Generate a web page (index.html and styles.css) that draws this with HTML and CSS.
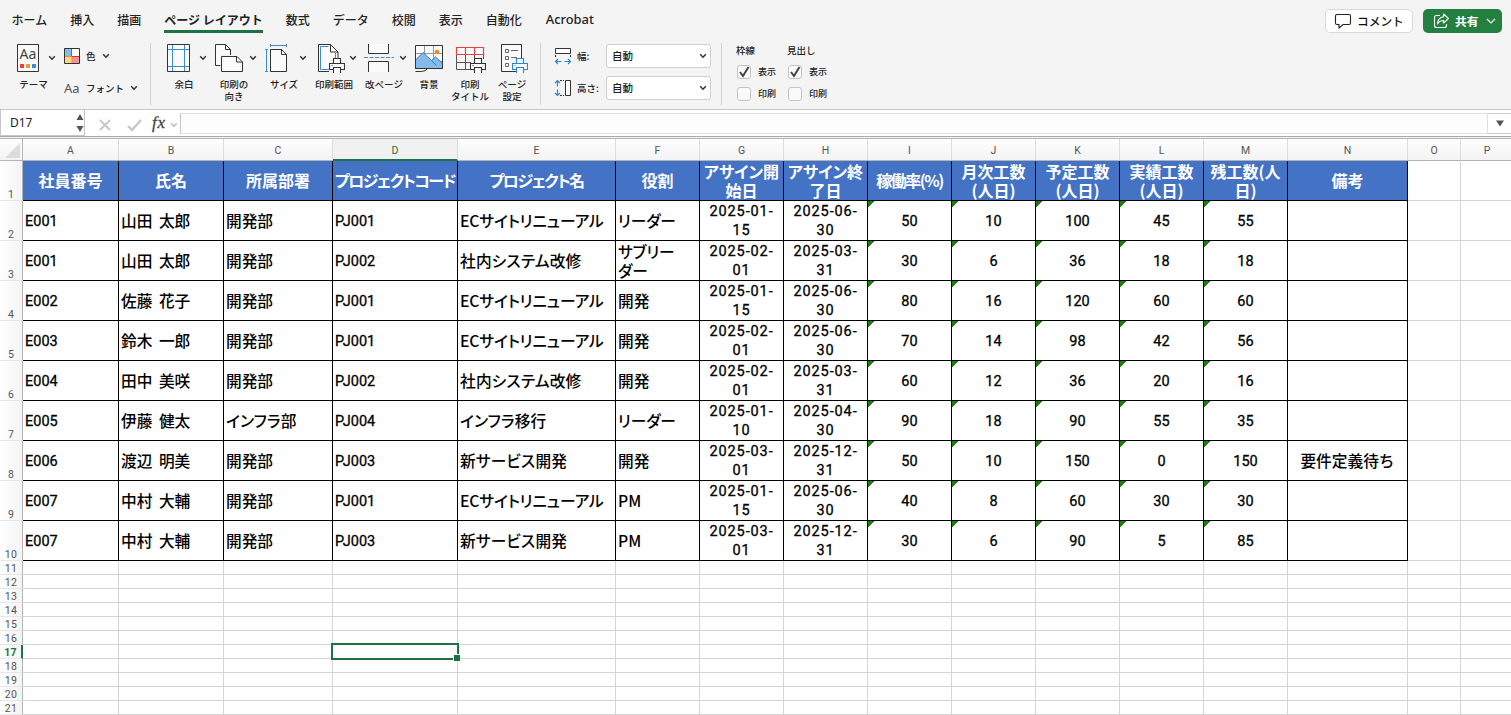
FILE: index.html
```html
<!DOCTYPE html>
<html lang="ja">
<head>
    <meta charset="UTF-8">
    <title>アサイン管理表</title>
    <link rel="stylesheet" href="styles.css">
</head>
<body>
    <!-- shared icon shapes -->
    <svg class="defs">
        <symbol id="chevron" viewBox="0 0 8 8"><path d="M1.200 2.300 4 5.200 6.800 2.300" fill="none" stroke="currentColor" stroke-width="1.500"/></symbol>
        <symbol id="printer" viewBox="0 0 16 16">
            <path d="M4.500 5.500v-5h7v5M4.500 11.500h-4v-6h15v6h-4" fill="#fafafa" stroke="currentColor" stroke-width="1.100"/>
            <path d="M4.500 9.500h7v6h-7z" fill="#fafafa" stroke="currentColor" stroke-width="1.100"/>
            <path d="M2.500 7.500h1" stroke="currentColor"/>
        </symbol>
    </svg>

    <header class="ribbon">
        <nav class="tabs">
            <a>ホーム</a>
            <a>挿入</a>
            <a>描画</a>
            <a class="active">ページ レイアウト</a>
            <a>数式</a>
            <a>データ</a>
            <a>校閲</a>
            <a>表示</a>
            <a>自動化</a>
            <a class="latin">Acrobat</a>
            <div class="actions">
                <button class="btn-comment">
                    <svg width="18" height="16" viewBox="0 0 18 16"><path d="M3 1.500h12q1.500 0 1.500 1.500v7q0 1.500-1.500 1.500H9L5 15v-3.500H3q-1.500 0-1.500-1.500V3q0-1.500 1.500-1.500z" fill="none" stroke="#222" stroke-width="1.100"/></svg>
                    <span>コメント</span>
                </button>
                <button class="btn-share">
                    <svg width="17" height="16" viewBox="0 0 17 16"><path d="M7 2.500H3.500q-2 0-2 2v8q0 2 2 2h8q2 0 2-2V11M10.500 1l5 4.500-5 4.500V7.500Q6.500 7.500 4.500 11q.5-6.500 6-7.200z" fill="none" stroke="#fff" stroke-width="1.100" stroke-linejoin="round"/></svg>
                    <span>共有</span>
                    <svg width="10" height="8" viewBox="0 0 10 8"><path d="M1 2l4 4 4-4" fill="none" stroke="#fff" stroke-width="1.100"/></svg>
                </button>
            </div>
        </nav>

        <div class="tools">
            <div class="tool theme">
                <div class="icon-row">
                    <svg width="32" height="30" viewBox="0 0 32 30">
                        <path d="M7.500 1.500h21v27h-21z" fill="#fafafa" stroke="#333"/>
                        <text x="9.500" y="15.500" class="aa">Aa</text>
                        <path d="M10 21h4v4h-4z" fill="#e8403a"/><path d="M16 21h4v4h-4z" fill="#f39a2d"/><path d="M22 21h4v4h-4z" fill="#3d8bd0"/>
                    </svg>
                    <svg class="chev"><use href="#chevron"/></svg>
                </div>
                <span>テーマ</span>
            </div>
            <div class="stack">
                <div class="small-tool">
                    <svg width="16" height="16" viewBox="0 0 16 16">
                        <path d="M0 0h8v8H0z" fill="#83bdec"/><path d="M8 0h8v8H8z" fill="#fff"/><path d="M0 8h8v8H0z" fill="#fbd68b"/><path d="M8 8h8v8H8z" fill="#f4919a"/>
                        <path d="M7.500 0v8" stroke="#2b7cc9"/><path d="M0 8.500h8v7" fill="none" stroke="#f0921e"/><path d="M8 8.500h8" stroke="#e52b22"/>
                        <path d="M.5.5h15v15H.5z" fill="none" stroke="#333"/>
                    </svg>
                    <span>色</span>
                    <svg class="chev"><use href="#chevron"/></svg>
                </div>
                <div class="small-tool">
                    <span class="font-icon">Aa</span>
                    <span>フォント</span>
                    <svg class="chev"><use href="#chevron"/></svg>
                </div>
            </div>

            <div class="divider"></div>

            <div class="tool">
                <div class="icon-row">
                    <svg width="38" height="30" viewBox="0 0 38 30">
                        <path d="M8.500 1.500h22v27h-22z" fill="#fafafa" stroke="#333"/>
                        <path d="M13.500 2v26M25.500 2v26M9 6.500h21M9 23.500h21" stroke="#3d8bd0"/>
                    </svg>
                    <svg class="chev"><use href="#chevron"/></svg>
                </div>
                <span>余白</span>
            </div>
            <div class="tool">
                <div class="icon-row">
                    <svg width="38" height="30" viewBox="0 0 38 30">
                        <path d="M6.500 1.500h10l5 5v16h-15z" fill="#fafafa" stroke="#333"/><path d="M16.500 1.500v5h5" fill="none" stroke="#333"/>
                        <path d="M11.500 12h16v0h6v18h-22z" fill="#f4f4f4"/>
                        <path d="M12.500 13.500h15.500l5.500 5.500v9.500h-21z" fill="#fafafa" stroke="#333"/><path d="M27.500 13.500v5.500h6" fill="none" stroke="#333"/>
                    </svg>
                    <svg class="chev"><use href="#chevron"/></svg>
                </div>
                <span>印刷の<br>向き</span>
            </div>
            <div class="tool">
                <div class="icon-row">
                    <svg width="38" height="30" viewBox="0 0 38 30">
                        <path d="M11.500 6.500h11l5 5v17h-16z" fill="#fafafa" stroke="#333"/><path d="M22.500 6.500v5h5" fill="none" stroke="#333"/>
                        <path d="M11.500 2.500h16M11.500 1v3M27.500 1v3M7.500 6.500v22M6 6.500h3M6 28.500h3" stroke="#3d8bd0"/>
                    </svg>
                    <svg class="chev"><use href="#chevron"/></svg>
                </div>
                <span>サイズ</span>
            </div>
            <div class="tool">
                <div class="icon-row">
                    <svg width="38" height="30" viewBox="0 0 38 30">
                        <path d="M9.500 1.500h12l7 7v19h-19z" fill="#fafafa"/>
                        <path d="M20 28.500H9.500v-27h12l7.500 7.500v6M21.500 1.500v7.500h7.500" fill="none" stroke="#333"/>
                        <path d="M20 26.500h-8.500v-23h8M26.500 10v5" fill="none" stroke="#3d8bd0"/>
                        <svg x="20" y="15" width="16" height="16" color="#333"><use href="#printer"/></svg>
                    </svg>
                    <svg class="chev"><use href="#chevron"/></svg>
                </div>
                <span>印刷範囲</span>
            </div>
            <div class="tool">
                <div class="icon-row">
                    <svg width="38" height="30" viewBox="0 0 38 30">
                        <path d="M9.500 1v9.500h20V1M9.500 29v-10.500h20V29" fill="#fafafa" stroke="#333"/>
                        <path d="M5 14.500h30" stroke="#3d8bd0" stroke-dasharray="4 1.500"/>
                    </svg>
                    <svg class="chev"><use href="#chevron"/></svg>
                </div>
                <span>改ページ</span>
            </div>
            <div class="tool w40">
                <div class="icon-row">
                    <svg width="38" height="30" viewBox="0 0 38 30">
                        <path d="M6.500 2.500h27v23h-9l-4 3h-7v-3h-7z" fill="#fafafa"/>
                        <path d="M15.500 2v23M24.500 2v23M6 10.500h27M6 18.500h27" stroke="#999"/>
                        <circle cx="28" cy="9" r="2.300" fill="#f28a22"/>
                        <path d="M6.500 17l7.500-7.500 8.500 8 4-3.500 7 6.500v5h-27z" fill="#86bbe9" stroke="#2b7cc9"/>
                        <path d="M22.500 17.500l5 5" stroke="#2b7cc9"/>
                        <path d="M6.500 25.500v-23h27v23zM6.500 28.500h6q4 0 6-3" fill="none" stroke="#333"/>
                    </svg>
                </div>
                <span>背景</span>
            </div>
            <div class="tool w42">
                <div class="icon-row">
                    <svg width="38" height="30" viewBox="0 0 38 30">
                        <path d="M7.500 12v14.500h14M7 19.500h15M16.500 12v14M25.500 12v6M34.500 12v4" fill="none" stroke="#555"/>
                        <path d="M7.500 4.500h27v7h-27zM16.500 4.500v7M25.500 4.500v7" fill="#fafafa" stroke="#e8403a" stroke-width="1.200"/>
                        <svg x="21" y="15" width="16" height="16" color="#333"><use href="#printer"/></svg>
                    </svg>
                </div>
                <span>印刷<br>タイトル</span>
            </div>
            <div class="tool w42">
                <div class="icon-row">
                    <svg width="38" height="30" viewBox="0 0 38 30">
                        <path d="M10.500 1.500h20v27h-20z" fill="#fafafa" stroke="#333"/>
                        <path d="M14.500 6.500h3v3h-3zM14.500 13.500h3v3h-3zM14.500 20.500h3v3h-3zM20 7.500h7M20 14.500h6" fill="none" stroke="#666"/>
                        <svg x="21" y="15" width="16" height="16" color="#2b86d0"><use href="#printer"/></svg>
                    </svg>
                </div>
                <span>ページ<br>設定</span>
            </div>

            <div class="divider after-page"></div>

            <div class="scale">
                <div class="scale-row">
                    <svg width="18" height="18" viewBox="0 0 18 18">
                        <path d="M1.500 1.500h15v5h-15z" fill="#fff" stroke="#333"/><path d="M1.500 8v3M16.500 8v3" stroke="#333" stroke-dasharray="2 1"/>
                        <path d="M1.500 14.500h6M10.500 14.500h6M4 12l-2.500 2.500L4 17M14 12l2.500 2.500L14 17" fill="none" stroke="#2b86d0" stroke-width="1.200"/>
                    </svg>
                    <label>幅:</label>
                    <div class="select">自動<svg class="chev"><use href="#chevron"/></svg></div>
                </div>
                <div class="scale-row">
                    <svg width="18" height="18" viewBox="0 0 18 18">
                        <path d="M11.500 1.500h5v15h-5z" fill="#fff" stroke="#333"/><path d="M6 1.500h4M6 16.500h4" stroke="#333" stroke-dasharray="2 1"/>
                        <path d="M3.500 1.500v6M3.500 10.500v6M1 4l2.500-2.500L6 4M1 14l2.500 2.500L6 14" fill="none" stroke="#2b86d0" stroke-width="1.200"/>
                    </svg>
                    <label>高さ:</label>
                    <div class="select">自動<svg class="chev"><use href="#chevron"/></svg></div>
                </div>
            </div>

            <div class="divider after-scale"></div>

            <div class="checks">
                <div class="title">枠線</div>
                <label><i class="box"><svg width="14" height="14" viewBox="0 0 14 14"><path d="M3 7l3 4 5.500-9" fill="none" stroke="#444" stroke-width="2"/></svg></i>表示</label>
                <label><i class="box"></i>印刷</label>
            </div>
            <div class="checks">
                <div class="title">見出し</div>
                <label><i class="box"><svg width="14" height="14" viewBox="0 0 14 14"><path d="M3 7l3 4 5.500-9" fill="none" stroke="#444" stroke-width="2"/></svg></i>表示</label>
                <label><i class="box"></i>印刷</label>
            </div>
        </div>
    </header>

    <div class="formula-bar">
        <div class="name-box">
            <span>D17</span>
            <svg width="8" height="20" viewBox="0 0 8 20"><path d="M4 1l3.500 6h-7zM4 19l3.500-6h-7z" fill="#555"/></svg>
        </div>
        <div class="fx-buttons">
            <svg width="14" height="14" viewBox="0 0 14 14"><path d="M2 2l10 10M12 2L2 12" stroke="#c8c8c8" stroke-width="2"/></svg>
            <svg width="15" height="14" viewBox="0 0 15 14"><path d="M1 8l4 4 9-10" fill="none" stroke="#c8c8c8" stroke-width="2.400"/></svg>
            <em>fx</em>
            <svg class="chev"><use href="#chevron"/></svg>
        </div>
        <div class="formula-input"></div>
        <div class="expand"><svg width="8" height="7" viewBox="0 0 8 7"><path d="M0 .5h8l-4 6z" fill="#555"/></svg></div>
    </div>

    <table class="sheet">
        <colgroup>
            <col class="c-head"><col class="c-a"><col class="c-b"><col class="c-c"><col class="c-d"><col class="c-e">
            <col class="c-n"><col class="c-n"><col class="c-n"><col class="c-n"><col class="c-n"><col class="c-n"><col class="c-n"><col class="c-n">
            <col class="c-note"><col class="c-o"><col class="c-p">
        </colgroup>
        <thead>
            <tr>
                <th class="corner"><svg width="15" height="15" viewBox="0 0 15 15"><path d="M15 0v15H0z" fill="#dcdcdc"/></svg></th>
                <th>A</th><th>B</th><th>C</th><th class="selected">D</th><th>E</th><th>F</th><th>G</th><th>H</th><th>I</th><th>J</th><th>K</th><th>L</th><th>M</th><th>N</th><th>O</th><th>P</th>
            </tr>
        </thead>
        <tbody>
            <tr class="title-row">
                <th>1</th>
                <td>社員番号</td><td>氏名</td><td>所属部署</td><td><span class="kana">プロジェクトコード</span></td><td><span class="kana">プロジェクト名</span></td><td>役割</td>
                <td><span class="kana2">アサイン開</span><br>始日</td><td><span class="kana2">アサイン終</span><br>了日</td><td><span class="pct">稼働率(%)</span></td>
                <td>月次工数<br>(人日)</td><td>予定工数<br>(人日)</td><td>実績工数<br>(人日)</td><td>残工数(人<br>日)</td><td>備考</td><td></td><td></td>
            </tr>
            <tr class="data">
                <th>2</th>
                <td>E001</td><td>山田 太郎</td><td>開発部</td><td>PJ001</td><td class="k">ECサイトリニューアル</td><td class="k">リーダー</td>
                <td>2025-01-<br>15</td><td>2025-06-<br>30</td><td>50</td><td>10</td><td>100</td><td>45</td><td>55</td><td></td><td></td><td></td>
            </tr>
            <tr class="data">
                <th>3</th>
                <td>E001</td><td>山田 太郎</td><td>開発部</td><td>PJ002</td><td class="k2">社内システム改修</td><td class="k">サブリー<br>ダー</td>
                <td>2025-02-<br>01</td><td>2025-03-<br>31</td><td>30</td><td>6</td><td>36</td><td>18</td><td>18</td><td></td><td></td><td></td>
            </tr>
            <tr class="data">
                <th>4</th>
                <td>E002</td><td>佐藤 花子</td><td>開発部</td><td>PJ001</td><td class="k">ECサイトリニューアル</td><td>開発</td>
                <td>2025-01-<br>15</td><td>2025-06-<br>30</td><td>80</td><td>16</td><td>120</td><td>60</td><td>60</td><td></td><td></td><td></td>
            </tr>
            <tr class="data">
                <th>5</th>
                <td>E003</td><td>鈴木 一郎</td><td>開発部</td><td>PJ001</td><td class="k">ECサイトリニューアル</td><td>開発</td>
                <td>2025-02-<br>01</td><td>2025-06-<br>30</td><td>70</td><td>14</td><td>98</td><td>42</td><td>56</td><td></td><td></td><td></td>
            </tr>
            <tr class="data">
                <th>6</th>
                <td>E004</td><td>田中 美咲</td><td>開発部</td><td>PJ002</td><td class="k2">社内システム改修</td><td>開発</td>
                <td>2025-02-<br>01</td><td>2025-03-<br>31</td><td>60</td><td>12</td><td>36</td><td>20</td><td>16</td><td></td><td></td><td></td>
            </tr>
            <tr class="data">
                <th>7</th>
                <td>E005</td><td>伊藤 健太</td><td class="k2">インフラ部</td><td>PJ004</td><td class="k2">インフラ移行</td><td class="k">リーダー</td>
                <td>2025-01-<br>10</td><td>2025-04-<br>30</td><td>90</td><td>18</td><td>90</td><td>55</td><td>35</td><td></td><td></td><td></td>
            </tr>
            <tr class="data">
                <th>8</th>
                <td>E006</td><td>渡辺 明美</td><td>開発部</td><td>PJ003</td><td class="k2">新サービス開発</td><td>開発</td>
                <td>2025-03-<br>01</td><td>2025-12-<br>31</td><td>50</td><td>10</td><td>150</td><td>0</td><td>150</td><td>要件定義待ち</td><td></td><td></td>
            </tr>
            <tr class="data">
                <th>9</th>
                <td>E007</td><td>中村 大輔</td><td>開発部</td><td>PJ001</td><td class="k">ECサイトリニューアル</td><td>PM</td>
                <td>2025-01-<br>15</td><td>2025-06-<br>30</td><td>40</td><td>8</td><td>60</td><td>30</td><td>30</td><td></td><td></td><td></td>
            </tr>
            <tr class="data">
                <th>10</th>
                <td>E007</td><td>中村 大輔</td><td>開発部</td><td>PJ003</td><td class="k2">新サービス開発</td><td>PM</td>
                <td>2025-03-<br>01</td><td>2025-12-<br>31</td><td>30</td><td>6</td><td>90</td><td>5</td><td>85</td><td></td><td></td><td></td>
            </tr>
            <tr><th>11</th><td></td><td></td><td></td><td></td><td></td><td></td><td></td><td></td><td></td><td></td><td></td><td></td><td></td><td></td><td></td><td></td></tr>
            <tr><th>12</th><td></td><td></td><td></td><td></td><td></td><td></td><td></td><td></td><td></td><td></td><td></td><td></td><td></td><td></td><td></td><td></td></tr>
            <tr><th>13</th><td></td><td></td><td></td><td></td><td></td><td></td><td></td><td></td><td></td><td></td><td></td><td></td><td></td><td></td><td></td><td></td></tr>
            <tr><th>14</th><td></td><td></td><td></td><td></td><td></td><td></td><td></td><td></td><td></td><td></td><td></td><td></td><td></td><td></td><td></td><td></td></tr>
            <tr><th>15</th><td></td><td></td><td></td><td></td><td></td><td></td><td></td><td></td><td></td><td></td><td></td><td></td><td></td><td></td><td></td><td></td></tr>
            <tr><th>16</th><td></td><td></td><td></td><td></td><td></td><td></td><td></td><td></td><td></td><td></td><td></td><td></td><td></td><td></td><td></td><td></td></tr>
            <tr><th class="selected">17</th><td></td><td></td><td></td><td class="active-cell"><div class="cursor"></div></td><td></td><td></td><td></td><td></td><td></td><td></td><td></td><td></td><td></td><td></td><td></td><td></td></tr>
            <tr><th>18</th><td></td><td></td><td></td><td></td><td></td><td></td><td></td><td></td><td></td><td></td><td></td><td></td><td></td><td></td><td></td><td></td></tr>
            <tr><th>19</th><td></td><td></td><td></td><td></td><td></td><td></td><td></td><td></td><td></td><td></td><td></td><td></td><td></td><td></td><td></td><td></td></tr>
            <tr><th>20</th><td></td><td></td><td></td><td></td><td></td><td></td><td></td><td></td><td></td><td></td><td></td><td></td><td></td><td></td><td></td><td></td></tr>
            <tr><th>21</th><td></td><td></td><td></td><td></td><td></td><td></td><td></td><td></td><td></td><td></td><td></td><td></td><td></td><td></td><td></td><td></td></tr>
        </tbody>
    </table>
</body>
</html>
```
FILE: styles.css
```css
* {
    box-sizing: border-box;
}

body {
    margin: 0;
    width: 1511px;
    height: 715px;
    overflow: hidden;
    background: #fff;
    color: #222;
    font-family: "Noto Sans CJK JP", sans-serif;
}

.defs {
    display: none;
}

.chev {
    width: 8px;
    height: 8px;
    color: #333;
    flex: none;
}

/* ribbon */
.ribbon {
    height: 110px;
    background: #f4f4f4;
    border-bottom: 1px solid #c6c6c6;
}

.tabs {
    display: flex;
    gap: 23px;
    height: 43px;
    padding-left: 11.500px;
    font-size: 12px;
    font-weight: 500;
}

.tabs a {
    height: 33px;
    line-height: 39px;
    white-space: nowrap;
}

.tabs .active {
    font-weight: 700;
    border-bottom: 3px solid #1e7145;
}

.tabs .latin {
    margin-left: 1px;
    font-family: "Noto Sans", sans-serif;
    font-size: 12.900px;
}

.actions {
    display: flex;
    gap: 10px;
    margin-left: auto;
    padding: 9px 9px 0 0;
}

.actions button {
    display: flex;
    align-items: center;
    height: 24px;
    padding: 0 8px;
    border-radius: 5px;
    font-family: inherit;
    font-size: 11.700px;
    font-weight: 500;
    line-height: 20px;
    white-space: nowrap;
}

.btn-comment {
    width: 88px;
    gap: 5px;
    background: #fff;
    border: 1px solid #d8d8d8;
    color: #111;
}

.btn-share {
    width: 79px;
    background: #238040;
    border: 0;
    color: #fff;
    gap: 5px;
}

.btn-share span {
    margin-right: 3px;
}

.btn-share svg {
    flex: none;
}

.actions .btn-share {
    padding-left: 10px;
    padding-right: 0;
    font-weight: 700;
}

.tools {
    display: flex;
    font-size: 9.500px;
    font-weight: 500;
    line-height: 12px;
}

.tool {
    width: 50px;
    text-align: center;
    white-space: nowrap;
}

.tool > span {
    display: block;
    margin: 5px -5px 0;
}

.tool.w40 {
    width: 40px;
}

.tool.w42 {
    width: 42px;
}

.icon-row {
    display: flex;
    align-items: center;
    height: 30px;
}

.icon-row > svg:first-child {
    flex: none;
}

.icon-row .chev {
    margin-left: 2px;
}

.tool.theme {
    width: 47px;
    margin-left: 10px;
    margin-right: 7px;
}

.theme .icon-row .chev {
    margin-left: 6px;
}

.aa {
    font-family: "Noto Sans", sans-serif;
    font-size: 14px;
    font-weight: 400;
    fill: #444;
}

.stack {
    display: flex;
    flex-direction: column;
    gap: 16px;
    width: 86px;
    padding-top: 5px;
}

.small-tool {
    display: flex;
    align-items: center;
    gap: 6px;
    height: 16px;
}

.font-icon {
    width: 16px;
    font-family: "Noto Sans", sans-serif;
    font-size: 13px;
    font-weight: 400;
    color: #555;
}

.divider {
    width: 1px;
    height: 62px;
    margin-right: 8px;
    background: #d2d2d2;
}

.after-page {
    margin-left: 7px;
}

.after-scale {
    margin-right: 7px;
}

.scale {
    display: flex;
    flex-direction: column;
    gap: 8px;
    width: 172px;
    padding: 1px 0 0 5px;
}

.scale-row {
    display: flex;
    align-items: center;
    height: 24px;
}

.scale-row label {
    width: 34px;
    padding-left: 5px;
    white-space: nowrap;
}

.select {
    display: flex;
    align-items: center;
    justify-content: space-between;
    width: 105px;
    height: 24px;
    padding: 0 3px 0 5px;
    background: #fff;
    border: 1px solid #cfcfcf;
    border-radius: 3px;
    font-size: 10.500px;
}

.checks {
    width: 51px;
    padding-left: 7px;
    font-size: 9px;
}

.checks .title {
    height: 21px;
    padding-top: 1px;
    font-size: 9.500px;
}

.checks label {
    display: flex;
    align-items: center;
    gap: 7px;
    height: 22px;
    margin-top: -3px;
    margin-bottom: 3px;
    padding-left: 1px;
    white-space: nowrap;
}

.checks label + label {
    margin-top: -3px;
}

.box {
    display: flex;
    width: 14px;
    height: 14px;
    background: #fafafa;
    border: 1px solid #c4c4c4;
    border-radius: 3px;
}

.box svg {
    margin: -1px;
}

/* formula bar */
.formula-bar {
    display: flex;
    height: 29px;
    background: linear-gradient(#fff 26px, #a9a9a9 26px, #a9a9a9 27px, #f4f4f4 27px, #f4f4f4 28px, #b4b4b4 28px);
}

.name-box {
    display: flex;
    align-items: center;
    justify-content: space-between;
    width: 85px;
    height: 26px;
    padding: 0 0 0 9px;
    border: 1px solid #c6c6c6;
    border-top: 0;
    font-family: "Noto Sans", sans-serif;
    font-size: 12px;
}

.fx-buttons {
    display: flex;
    align-items: center;
    width: 95px;
    height: 26px;
    padding: 3px 0 0 13px;
    gap: 15px;
}

.fx-buttons em {
    font: italic 400 17px "Liberation Serif", serif;
    -webkit-text-stroke: 0.300px #444;
    letter-spacing: 0.700px;
    color: #444;
    margin: -3px -11px 0 -5px;
}

.fx-buttons .chev {
    color: #bbb;
}

.formula-input {
    flex: 1;
    height: 21px;
    margin-top: 3px;
    border: 1px solid #e0e0e0;
    border-left-color: #c6c6c6;
    background: #fdfdfd;
}

.expand {
    display: flex;
    align-items: center;
    justify-content: center;
    width: 23px;
    height: 21px;
    margin-top: 3px;
    border: 1px solid #ccc;
    border-width: 1px 0 1px 0;
}

/* sheet */
.sheet {
    width: 1511px;
    table-layout: fixed;
    border-collapse: separate;
    border-spacing: 0;
}

.c-head { width: 23px; }
.c-a { width: 96px; }
.c-b { width: 105px; }
.c-c { width: 109px; }
.c-d { width: 125px; }
.c-e { width: 158px; }
.c-n { width: 84px; }
.c-note { width: 120px; }
.c-o { width: 53px; }
.c-p { width: 50px; }

.sheet th {
    padding: 0;
    font-family: Roboto, "Noto Sans CJK JP", sans-serif;
    font-size: 10.500px;
    font-weight: 400;
    color: #555;
    line-height: 12px;
}

.sheet thead th {
    height: 22px;
    padding-top: 2px;
    background: linear-gradient(#fdfdfd, #f4f4f4);
    border-right: 1px solid #ddd;
    border-bottom: 1px solid #b4b4b4;
}

.sheet thead th:last-child {
    padding-left: 2px;
    border-right: 0;
}

.sheet thead .corner {
    padding: 2px 2px 0 0;
    text-align: right;
    border-right-color: #b4b4b4;
}

.corner svg {
    display: block;
    margin-left: auto;
}

.sheet thead .selected {
    padding-top: 3px;
    background: #f1f1f1;
    color: #1e7145;
    border-bottom: 2px solid #1e7145;
}

.sheet tbody th {
    height: 14px;
    padding-top: 1px;
    background: linear-gradient(90deg, #fff, #f4f4f4);
    border-right: 1px solid #b4b4b4;
    border-bottom: 1px solid #e6e6e6;
    line-height: 11px;
    letter-spacing: 0.300px;
    vertical-align: bottom;
}

.sheet tbody .selected {
    color: #1e7145;
    font-weight: 700;
    border-right: 2px solid #1e7145;
}

.sheet td {
    height: 14px;
    padding: 0;
    border-right: 1px solid #d4d4d4;
    border-bottom: 1px solid #d4d4d4;
}

.sheet td:last-child {
    border-right: 0;
}

.title-row td,
.data td {
    height: 40px;
    color: #000;
    font-size: 15.700px;
    font-weight: 500;
    line-height: 19px;
    white-space: nowrap;
}

.title-row td:nth-child(-n+15),
.data td:nth-child(-n+15) {
    border-color: #000;
}

.title-row td {
    text-align: center;
    font-size: 16px;
    font-weight: 700;
    color: #fff;
}

.title-row td:nth-child(-n+15) {
    background: #4472c4;
}

.data td {
    padding-left: 2px;
    word-spacing: 3px;
}

.data td:nth-child(2),
.data td:nth-child(5),
.data td:nth-child(n+8):nth-child(-n+14) {
    padding-top: 2px;
    font-family: Roboto, "Noto Sans CJK JP", sans-serif;
    font-size: 14.500px;
    font-weight: 400;
    -webkit-text-stroke: 0.300px #000;
}

.data td:nth-child(n+8) {
    padding-left: 0;
    text-align: center;
}

.data td:nth-child(8),
.data td:nth-child(9) {
    letter-spacing: 0.900px;
}

.data td:nth-child(n+8):nth-child(-n+9) {
    padding-top: 2px;
    line-height: 18.500px;
}

/* imported numbers stored as text get the green corner */
.data td:nth-child(n+10):nth-child(-n+14) {
    background: linear-gradient(135deg, #1e7d0a 4.500px, transparent 4.500px);
}

.kana,
.kana2,
.pct,
.data .k,
.data .k2 {
    font-feature-settings: "palt";
}

.kana,
.pct {
    letter-spacing: -1.500px;
}

.data .k {
    letter-spacing: -0.100px;
}

.data .k2 {
    letter-spacing: 0.200px;
}

.active-cell {
    position: relative;
}

.cursor {
    position: absolute;
    left: -2px;
    top: -2px;
    width: 128px;
    height: 17px;
    border: 2px solid #1e7145;
}

.cursor::after {
    content: "";
    position: absolute;
    right: -3px;
    bottom: -3px;
    width: 6px;
    height: 6px;
    background: #1e7145;
    border: solid #fff;
    border-width: 1px 0 0 1px;
}
```
